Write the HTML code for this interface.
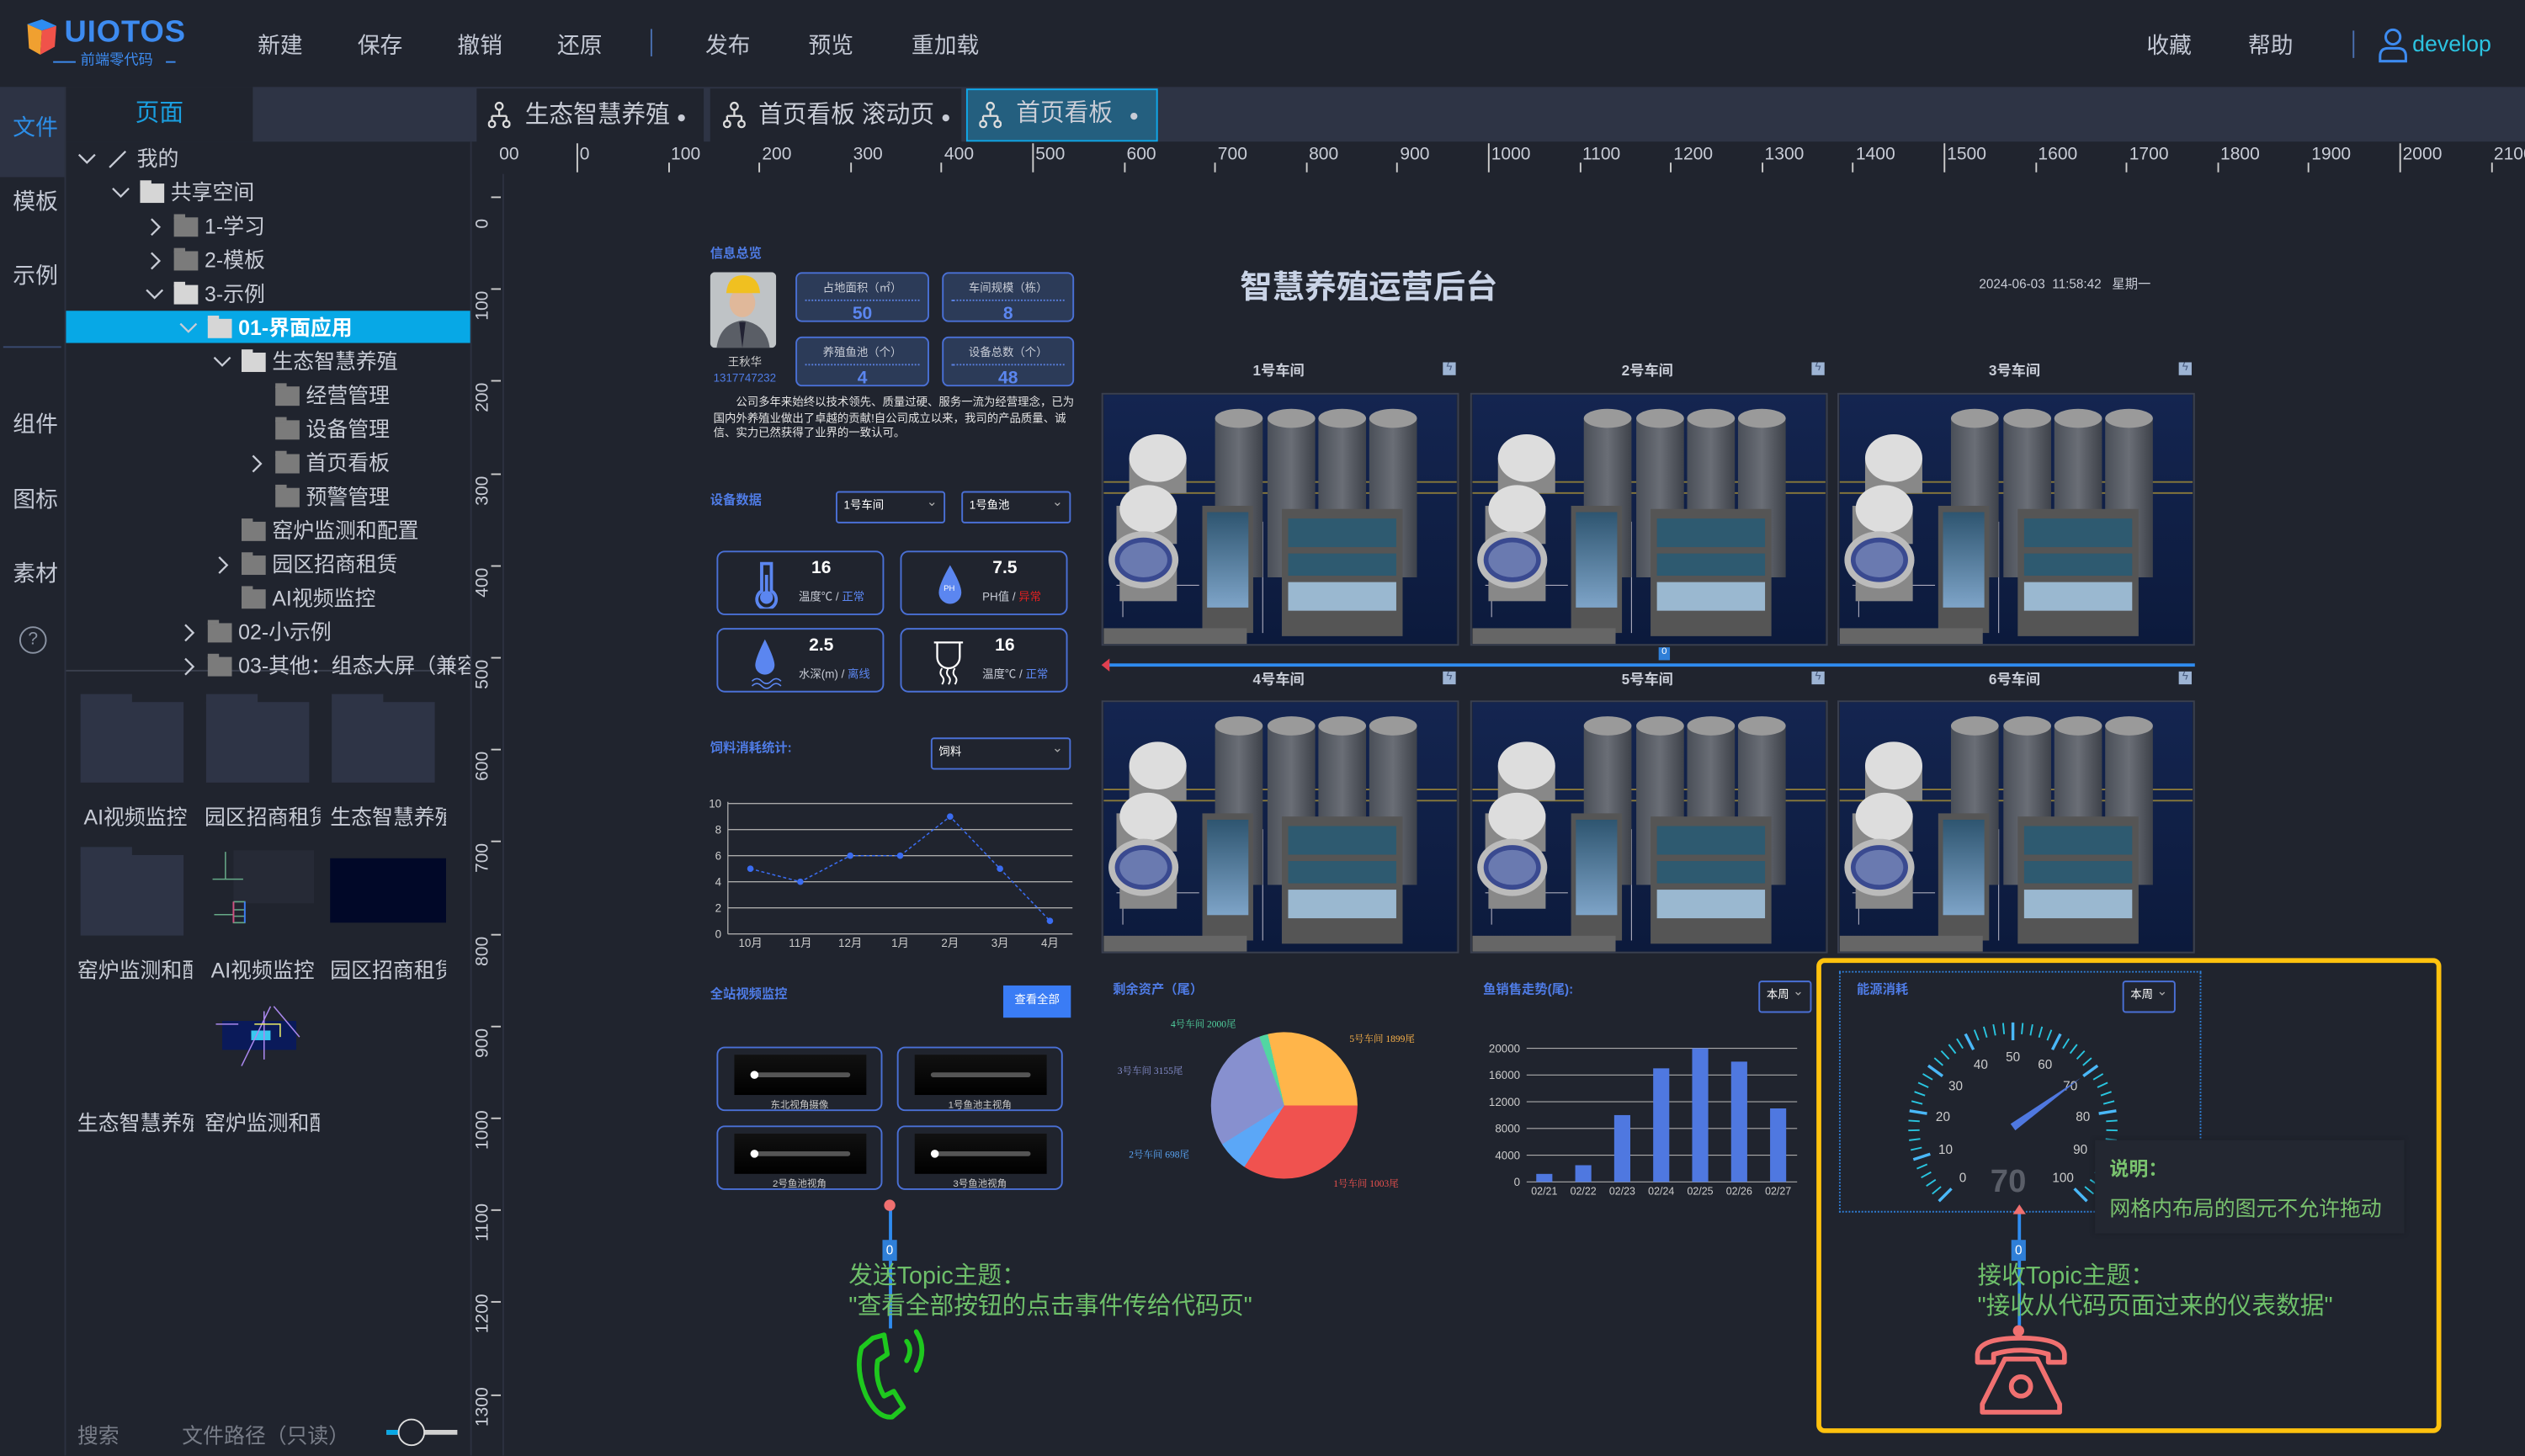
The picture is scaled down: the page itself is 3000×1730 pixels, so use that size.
<!DOCTYPE html>
<html><head><meta charset="utf-8">
<style>
*{margin:0;padding:0;box-sizing:border-box}
html,body{width:3000px;height:1730px;overflow:hidden;background:#20242e}
body{font-family:"Liberation Sans","Noto Sans CJK SC",sans-serif;color:#c8ccd6}
#s{position:absolute;left:0;top:0;width:1568px;height:904px;transform:scale(1.91327);transform-origin:0 0;background:#20242e;overflow:hidden}
.a{position:absolute;white-space:nowrap}
.m{font-size:14px;color:#c3c8d4;top:18px}
.tr{font-size:13px;color:#c8ccd6;line-height:21px;height:21px}
.fo{position:absolute;width:15px;height:12px;background:#7b7b7b;top:5px}
.fo:before{content:"";position:absolute;left:0;top:-2px;width:7px;height:3px;background:inherit}
.fo.o{background:#d6d6d6}
.chev{position:absolute;font-size:11px;color:#c8ccd6}
.lc{font-size:14px;color:#c3c8d4;left:8px}
.tab{position:absolute;top:55px;height:33px;background:#20242e;font-size:15px;color:#c8ccd6;line-height:33px;padding-left:30px}
.bx{position:absolute;background:#2c3b58;border:1px solid #4a70d6;border-radius:4px;text-align:center}
.bx .l{font-size:7px;color:#c8ccd6;margin-top:4px;border-bottom:1px dotted #5a80e0;margin:4px 5px 0;padding-bottom:2px}
.bx .v{font-size:11px;color:#5b86f0;font-weight:bold;margin-top:2px}
.h{font-size:8px;color:#4f7ce6;font-weight:bold}
.sel{position:absolute;border:1px solid #4a70d6;border-radius:2px;font-size:7px;color:#fff;padding-left:4px;line-height:18px;height:20px}
.sel:after{content:"⌄";position:absolute;right:4px;top:-3px;color:#aaa;font-size:8px}
.dc{position:absolute;border:1px solid #4a70d6;border-radius:5px;width:104px;height:40px}
.dc .n{position:absolute;left:64px;top:4px;font-size:11px;color:#fff;font-weight:bold;transform:translateX(-50%)}
.dc .t{position:absolute;left:50px;top:23px;font-size:7px;color:#c8ccd6}
.vc{position:absolute;border:1px solid #4a70d6;border-radius:5px;width:103px;height:40px}
.vc .sc{position:absolute;left:10px;top:4px;width:82px;height:25px;background:linear-gradient(#111,#000)}
.vc .sc i{position:absolute;left:10px;right:10px;top:11px;height:3px;border-radius:2px;background:#555}
.vc .sc b{position:absolute;left:10px;top:10px;width:5px;height:5px;border-radius:50%;background:#fff}
.vc .t{position:absolute;width:100%;text-align:center;top:30px;font-size:6px;color:#ccc}
.ws{position:absolute;width:222px;height:157px}
.wl{position:absolute;font-size:9px;color:#c8ccd6;font-weight:bold}
.bolt{position:absolute;width:8px;height:8px;background:#9db4d4;font-size:7px;line-height:8px;text-align:center;color:#4a5d80}
.rl{position:absolute;top:90px;font-size:11px;color:#c8ccd6}
.rt{position:absolute;top:101px;width:1px;height:6px;background:#ccc}
.vr{position:absolute;left:294px;font-size:11px;color:#c8ccd6;transform:rotate(-90deg);transform-origin:0 0}
.thl{position:absolute;font-size:13px;color:#c8ccd6;width:72px;overflow:hidden;white-space:nowrap}
.tf{position:absolute;width:64px;height:50px;background:#2e3446}
.tf:before{content:"";position:absolute;left:0;top:-5px;width:32px;height:6px;background:#2e3446}
</style></head><body>
<svg width="0" height="0" style="position:absolute">
<defs>
<linearGradient id="bg" x1="0" y1="0" x2="0" y2="1"><stop offset="0" stop-color="#142550"/><stop offset="1" stop-color="#0c1a3c"/></linearGradient>
<linearGradient id="cy" x1="0" y1="0" x2="1" y2="0"><stop offset="0" stop-color="#4a4f58"/><stop offset=".5" stop-color="#6a6e76"/><stop offset="1" stop-color="#3e424a"/></linearGradient>
<linearGradient id="wt" x1="0" y1="0" x2="0" y2="1"><stop offset="0" stop-color="#2e5570"/><stop offset="1" stop-color="#7ea4c8"/></linearGradient>
<symbol id="w" viewBox="0 0 222 157">
<rect width="222" height="157" fill="url(#bg)"/>
<path d="M0 55H222M0 62H222" stroke="#8a7a3a" stroke-width="1"/>
<path d="M12 70V140M100 80V150M8 120H60" stroke="#aab" stroke-width=".6" fill="none"/>
<g fill="url(#cy)"><rect x="70" y="15" width="30" height="100"/><rect x="103" y="15" width="30" height="100"/><rect x="135" y="15" width="30" height="100"/><rect x="167" y="15" width="30" height="100"/></g>
<g fill="#9a9a9a"><ellipse cx="85" cy="15" rx="15" ry="6"/><ellipse cx="118" cy="15" rx="15" ry="6"/><ellipse cx="150" cy="15" rx="15" ry="6"/><ellipse cx="182" cy="15" rx="15" ry="6"/></g>
<g fill="#888"><rect x="16" y="40" width="36" height="22"/><rect x="10" y="100" width="36" height="30"/><rect x="8" y="70" width="38" height="24"/></g>
<g fill="#ddd"><ellipse cx="34" cy="40" rx="18" ry="15"/><ellipse cx="28" cy="72" rx="18" ry="15"/></g>
<ellipse cx="25" cy="104" rx="22" ry="18" fill="#bbb"/><ellipse cx="25" cy="104" rx="18" ry="14" fill="#3a4a90"/><ellipse cx="25" cy="104" rx="15" ry="11" fill="#6a7ab0"/>
<rect x="62" y="70" width="32" height="80" fill="#555"/><rect x="65" y="74" width="26" height="60" fill="url(#wt)"/>
<rect x="112" y="72" width="76" height="80" fill="#555"/><rect x="116" y="78" width="68" height="18" fill="#2e5a70"/><rect x="116" y="100" width="68" height="14" fill="#2e5a70"/><rect x="116" y="118" width="68" height="18" fill="#9ab8d0"/>
<rect x="0" y="147" width="90" height="10" fill="#666"/>
</symbol>
</defs></svg>
<div id="s">
<!-- top bar -->
<svg class="a" style="left:14px;top:11px" width="24" height="24" viewBox="0 0 24 24"><path d="M3 4L12 1L21 5L12 8Z" fill="#2e8cf0"/><path d="M3 4L12 8L11 23L4 19Z" fill="#f0a030"/><path d="M12 8L21 5L20 18L11 23Z" fill="#f0524a"/></svg>
<div class="a" style="left:40px;top:10px;font-size:19px;color:#3d8bf0;font-weight:bold;letter-spacing:.5px">UIOTOS</div>
<div class="a" style="left:50px;top:30px;font-size:9px;color:#3d8bf0">前端零代码</div>
<div class="a" style="left:33px;top:38px;width:14px;height:1px;background:#3d8bf0"></div>
<div class="a" style="left:103px;top:38px;width:6px;height:1px;background:#3d8bf0"></div>
<div class="a m" style="left:160px">新建</div><div class="a m" style="left:222px">保存</div><div class="a m" style="left:284px">撤销</div><div class="a m" style="left:346px">还原</div>
<div class="a" style="left:404px;top:18px;width:1px;height:17px;background:#4a6fb0"></div>
<div class="a m" style="left:438px">发布</div><div class="a m" style="left:502px">预览</div><div class="a m" style="left:566px">重加载</div>
<div class="a m" style="left:1333px">收藏</div><div class="a m" style="left:1396px">帮助</div>
<div class="a" style="left:1461px;top:19px;width:1px;height:17px;background:#4a6fb0"></div>
<svg class="a" style="left:1476px;top:17px" width="20" height="22" viewBox="0 0 20 22"><circle cx="10" cy="6" r="4.5" fill="none" stroke="#3d8bf0" stroke-width="1.6"/><path d="M2 21V18Q2 13 7 13H13Q18 13 18 18V21Z" fill="none" stroke="#3d8bf0" stroke-width="1.6"/></svg>
<div class="a" style="left:1498px;top:19px;font-size:14px;color:#2cc3e0">develop</div>
<!-- row2 -->
<div class="a" style="left:0;top:54px;width:1568px;height:34px;background:#2e3445"></div>
<div class="a" style="left:0;top:54px;width:40px;height:850px;background:#20242e"></div>
<div class="a" style="left:0;top:54px;width:40px;height:56px;background:#2d3344"></div>
<div class="a lc" style="top:69px;color:#2c8ee8">文件</div>
<div class="a lc" style="top:115px">模板</div><div class="a lc" style="top:161px">示例</div>
<div class="a" style="left:2px;top:215px;width:36px;height:1px;background:#3a4a70"></div>
<div class="a lc" style="top:253px">组件</div><div class="a lc" style="top:300px">图标</div><div class="a lc" style="top:346px">素材</div>
<div class="a" style="left:12px;top:389px;width:17px;height:17px;border:1px solid #8a93a3;border-radius:50%;font-size:11px;text-align:center;line-height:15px;color:#8a93a3">?</div>
<div class="a" style="left:40px;top:54px;width:1px;height:850px;background:#2c3140"></div>
<div class="a" style="left:41px;top:54px;width:116px;height:34px;background:#20242e;color:#1a9fe0;font-size:15px;text-align:center;line-height:34px">页面</div>
<div class="a" style="left:292px;top:88px;width:1px;height:816px;background:#2c3140"></div>
<!-- tree -->
<div class="a" style="left:41px;top:193px;width:251px;height:20px;background:#07a8e6"></div>
<div id="tree"></div>
<div class="a" style="left:41px;top:416px;width:251px;height:1px;background:#3a3f4d"></div>
<!-- thumbs -->
<div class="tf" style="left:50px;top:436px"></div><div class="tf" style="left:128px;top:436px"></div><div class="tf" style="left:206px;top:436px"></div>
<div class="thl" style="left:52px;top:497px">AI视频监控</div><div class="thl" style="left:127px;top:497px">园区招商租赁</div><div class="thl" style="left:205px;top:497px">生态智慧养殖</div>
<div class="tf" style="left:50px;top:531px"></div>
<svg class="a" style="left:125px;top:528px" width="70" height="50"><rect x="20" y="0" width="50" height="33" fill="#262a36"/><path d="M15 1V18H26M7 18H15M8 40H20M20 32V45H27V32H20M20 37H27M20 41H27" stroke="#6a8" stroke-width=".8" fill="none"/><path d="M20 32V45" stroke="#d05080"/><path d="M27 32V45" stroke="#3a7cf5"/></svg>
<div class="a" style="left:205px;top:533px;width:72px;height:40px;background:#010828"></div>
<div class="thl" style="left:48px;top:592px">窑炉监测和配置</div><div class="thl" style="left:131px;top:592px">AI视频监控</div><div class="thl" style="left:205px;top:592px">园区招商租赁</div>
<svg class="a" style="left:134px;top:624px" width="60" height="42"><rect x="4" y="10" width="46" height="18" fill="#0a1a5a"/><rect x="22" y="16" width="12" height="6" fill="#3ac8f0"/><path d="M34 1L16 38M36 1L52 20M30 4V34M0 12H14" stroke="#a8e" stroke-width=".8"/><path d="M24 12H40V20" stroke="#ee6" stroke-width=".8" fill="none"/></svg>
<div class="thl" style="left:48px;top:687px">生态智慧养殖</div><div class="thl" style="left:127px;top:687px">窑炉监测和配置</div>
<div class="a" style="left:48px;top:881px;font-size:13px;color:#787d88">搜索</div>
<div class="a" style="left:113px;top:881px;font-size:13px;color:#787d88">文件路径（只读）</div>
<div class="a" style="left:240px;top:888px;width:44px;height:3px;background:#d0d0d0"></div>
<div class="a" style="left:240px;top:888px;width:10px;height:3px;background:#07a8e6"></div>
<div class="a" style="left:247px;top:881px;width:17px;height:17px;border-radius:50%;border:1.5px solid #ddd;background:#20242e"></div>
<!-- tabs -->
<div class="tab" style="left:296px;width:141px">生态智慧养殖 <span style="font-size:10px">●</span></div>
<div class="tab" style="left:441px;width:156px">首页看板 滚动页 <span style="font-size:10px">●</span></div>
<div class="tab" style="left:600px;width:119px;background:#245f7f;border:1.5px solid #10a8ea;line-height:30px">首页看板 <span style="font-size:10px;margin-left:6px">●</span></div>
<div id="tabic"></div>
<!-- rulers -->
<div id="rul"></div>
<!-- content -->
<div class="a h" style="left:441px;top:152px">信息总览</div>
<svg class="a" style="left:441px;top:169px" width="41" height="47"><rect width="41" height="47" rx="3" fill="#bfc3c6"/><path d="M4 47Q6 32 20 30Q35 32 37 47Z" fill="#5a5e66"/><path d="M18 31L20 47L22 31Z" fill="#223"/><ellipse cx="20" cy="19" rx="8" ry="9" fill="#e0b89a"/><path d="M10 13Q11 2 20 2Q30 2 31 13Z" fill="#f0c020"/></svg>
<div class="a" style="left:452px;top:220px;font-size:7px;color:#ccc">王秋华</div>
<div class="a" style="left:443px;top:232px;font-size:7px;color:#4f7ce6">1317747232</div>
<div class="bx" style="left:494px;top:169px;width:83px;height:31px"><div class="l">占地面积（㎡）</div><div class="v">50</div></div>
<div class="bx" style="left:585px;top:169px;width:82px;height:31px"><div class="l">车间规模（栋）</div><div class="v">8</div></div>
<div class="bx" style="left:494px;top:209px;width:83px;height:31px"><div class="l">养殖鱼池（个）</div><div class="v">4</div></div>
<div class="bx" style="left:585px;top:209px;width:82px;height:31px"><div class="l">设备总数（个）</div><div class="v">48</div></div>
<div class="a" style="left:443px;top:246px;width:224px;white-space:normal;font-size:7px;line-height:9.5px;color:#e4e4e4;text-indent:14px">公司多年来始终以技术领先、质量过硬、服务一流为经营理念，已为国内外养殖业做出了卓越的贡献!自公司成立以来，我司的产品质量、诚信、实力已然获得了业界的一致认可。</div>
<div class="a h" style="left:441px;top:305px">设备数据</div>
<div class="sel" style="left:519px;top:305px;width:68px">1号车间</div>
<div class="sel" style="left:597px;top:305px;width:68px">1号鱼池</div>
<div class="dc" style="left:445px;top:342px"><svg class="a" style="left:20px;top:5px" width="20" height="30"><path d="M7 2H13V19A6 6 0 1 1 7 19Z" fill="none" stroke="#5b86f0" stroke-width="2"/><circle cx="10" cy="23" r="4" fill="#5b86f0"/><rect x="9" y="9" width="2" height="12" fill="#5b86f0"/></svg><div class="n">16</div><div class="t">温度℃ / <span style="color:#5b86f0">正常</span></div></div>
<div class="dc" style="left:559px;top:342px"><svg class="a" style="left:22px;top:7px" width="16" height="26"><path d="M8 1Q15 13 15 18A7 7 0 0 1 1 18Q1 13 8 1Z" fill="#5b86f0"/><text x="4" y="17" font-size="5" fill="#fff">PH</text></svg><div class="n">7.5</div><div class="t">PH值 / <span style="color:#e02020">异常</span></div></div>
<div class="dc" style="left:445px;top:390px"><svg class="a" style="left:20px;top:5px" width="20" height="32"><path d="M9 1Q15 13 15 17A6 6 0 0 1 3 17Q3 13 9 1Z" fill="#5b86f0"/><path d="M1 27Q4 24 7 27T13 27T19 27M1 30Q4 27 7 30T13 30T19 30" stroke="#5b86f0" fill="none" stroke-width=".8"/></svg><div class="n">2.5</div><div class="t">水深(m) / <span style="color:#5b86f0">离线</span></div></div>
<div class="dc" style="left:559px;top:390px"><svg class="a" style="left:18px;top:5px" width="22" height="30"><path d="M2 3H20M4 3V12A7 7 0 0 0 18 12V3" fill="none" stroke="#fff" stroke-width="1.2"/><path d="M7 19Q5 22 7 24T7 29M11 19Q9 22 11 24T11 29M15 19Q13 22 15 24T15 29" stroke="#fff" fill="none" stroke-width="1"/></svg><div class="n">16</div><div class="t">温度℃ / <span style="color:#5b86f0">正常</span></div></div>
<div class="a h" style="left:441px;top:459px">饲料消耗统计:</div>
<div class="sel" style="left:578px;top:458px;width:87px">饲料</div>
<svg class="a" style="left:438px;top:494px" width="232" height="100" id="lc"></svg>
<div class="a h" style="left:441px;top:612px">全站视频监控</div>
<div class="a" style="left:623px;top:612px;width:42px;height:20px;background:#3a7cf5;font-size:7px;color:#fff;text-align:center;line-height:20px">查看全部</div>
<div class="vc" style="left:445px;top:650px"><div class="sc"><i></i><b></b></div><div class="t">东北视角摄像</div></div>
<div class="vc" style="left:557px;top:650px"><div class="sc"><i></i></div><div class="t">1号鱼池主视角</div></div>
<div class="vc" style="left:445px;top:699px"><div class="sc"><i></i><b></b></div><div class="t">2号鱼池视角</div></div>
<div class="vc" style="left:557px;top:699px"><div class="sc"><i></i><b></b></div><div class="t">3号鱼池视角</div></div>
<div class="a" style="left:770px;top:162px;font-size:20px;font-weight:bold;color:#c9d3e6">智慧养殖运营后台</div>
<div class="a" style="left:1229px;top:171px;font-size:8px;color:#c8ccd6">2024-06-03 &nbsp;11:58:42 &nbsp;&nbsp;星期一</div>
<div id="ws"></div>
<div class="a" style="left:688px;top:412px;width:675px;height:2px;background:#2f8cf0"></div>
<div class="a" style="left:684px;top:409px;width:0;height:0;border:4px solid transparent;border-right:5px solid #e04050;border-left:0"></div>
<div class="a" style="left:1030px;top:402px;width:7px;height:8px;background:#2f7fd8;font-size:6px;color:#fff;text-align:center">0</div>
<div class="a h" style="left:691px;top:609px">剩余资产（尾）</div>
<div class="a" style="left:752px;top:641px;width:91px;height:91px;border-radius:50%;background:conic-gradient(#ffb54a 0 90deg,#f0524f 90deg 213deg,#5ba7f7 213deg 238deg,#8790cf 238deg 340deg,#52d6a2 340deg 347deg,#ffb54a 347deg)"></div>
<div class="a" style="left:727px;top:631px;font-size:6px;color:#52d6a2;font-family:'Liberation Serif','Noto Serif CJK SC',serif">4号车间 2000尾</div>
<div class="a" style="left:838px;top:640px;font-size:6px;color:#ffb54a;font-family:'Liberation Serif','Noto Serif CJK SC',serif">5号车间 1899尾</div>
<div class="a" style="left:694px;top:660px;font-size:6px;color:#8790cf;font-family:'Liberation Serif','Noto Serif CJK SC',serif">3号车间 3155尾</div>
<div class="a" style="left:701px;top:712px;font-size:6px;color:#5ba7f7;font-family:'Liberation Serif','Noto Serif CJK SC',serif">2号车间 698尾</div>
<div class="a" style="left:828px;top:730px;font-size:6px;color:#f0524f;font-family:'Liberation Serif','Noto Serif CJK SC',serif">1号车间 1003尾</div>
<div class="a h" style="left:921px;top:609px">鱼销售走势(尾):</div>
<div class="sel" style="left:1092px;top:609px;width:33px">本周</div>
<svg class="a" style="left:920px;top:640px" width="200" height="110" id="bc"></svg>
<!-- yellow box -->
<div class="a" style="left:1128px;top:595px;width:388px;height:295px;border:3px solid #ffc20e;border-radius:5px"></div>
<div class="a" style="left:1142px;top:603px;width:225px;height:150px;border:1.5px dotted #2f7fd8"></div>
<div class="a h" style="left:1153px;top:609px">能源消耗</div>
<div class="sel" style="left:1318px;top:609px;width:33px">本周</div>
<svg class="a" style="left:1170px;top:620px" width="160" height="130" id="gg"></svg>
<div class="a" style="left:1236px;top:723px;font-size:20px;font-weight:bold;color:#5a5e68">70</div>
<div class="a" style="left:1301px;top:708px;width:192px;height:58px;background:#232731;box-shadow:0 0 3px #1a1d25"></div>
<div class="a" style="left:1310px;top:717px;font-size:12px;font-weight:bold;color:#79c26e">说明：</div>
<div class="a" style="left:1310px;top:740px;font-size:13px;color:#79c26e">网格内布局的图元不允许拖动</div>
<!-- connectors -->
<div class="a" style="left:552px;top:750px;width:2px;height:75px;background:#2f8cf0"></div>
<div class="a" style="left:549px;top:745px;width:7px;height:7px;border-radius:50%;background:#f07070"></div>
<div class="a" style="left:548px;top:770px;width:9px;height:13px;background:#2f7fd8;font-size:8px;color:#fff;text-align:center;line-height:13px">0</div>
<div class="a" style="left:527px;top:783px;font-size:15px;color:#6ebf6a;line-height:19px">发送Topic主题：<br>"查看全部按钮的点击事件传给代码页"</div>
<svg class="a" style="left:527px;top:823px" width="52" height="60"><path d="M15 8L22 6L24 18L18 22Q16 34 22 44L28 41L34 51L27 57Q18 58 11 44Q4 28 8 14Z" fill="none" stroke="#1ec81e" stroke-width="3" stroke-linejoin="round"/><path d="M36 10Q40 15 36 22M42 4Q49 15 42 28" fill="none" stroke="#1ec81e" stroke-width="3" stroke-linecap="round"/></svg>
<div class="a" style="left:1253px;top:752px;width:2px;height:74px;background:#2f8cf0"></div>
<div class="a" style="left:1250px;top:748px;width:0;height:0;border-left:4px solid transparent;border-right:4px solid transparent;border-bottom:6px solid #f07070"></div>
<div class="a" style="left:1249px;top:770px;width:9px;height:13px;background:#2f7fd8;font-size:8px;color:#fff;text-align:center;line-height:13px">0</div>
<div class="a" style="left:1250px;top:823px;width:7px;height:7px;border-radius:50%;background:#f07070"></div>
<div class="a" style="left:1228px;top:783px;font-size:15px;color:#6ebf6a;line-height:19px">接收Topic主题：<br>"接收从代码页面过来的仪表数据"</div>
<svg class="a" style="left:1225px;top:828px" width="60" height="52"><path d="M3 18V13Q4 3 30 3Q56 3 57 13V18H47V13Q30 8 13 13V18Z" fill="none" stroke="#f07070" stroke-width="3" stroke-linejoin="round"/><path d="M20 16L6 44V49H54V44L40 16Z" fill="none" stroke="#f07070" stroke-width="3" stroke-linejoin="round"/><circle cx="30" cy="33" r="6" fill="none" stroke="#f07070" stroke-width="3"/></svg>
</div>
<script>
function el(h){var d=document.createElement('div');d.innerHTML=h;while(d.firstChild)document.getElementById('s').appendChild(d.firstChild);}
// tree
var T=[[0,'v','/', '我的'],[1,'v','o','共享空间'],[2,'>','c','1-学习'],[2,'>','c','2-模板'],[2,'v','o','3-示例'],[3,'v','o','01-界面应用'],[4,'v','o','生态智慧养殖'],[5,'','c','经营管理'],[5,'','c','设备管理'],[5,'>','c','首页看板'],[5,'','c','预警管理'],[4,'','c','窑炉监测和配置'],[4,'>','c','园区招商租赁'],[4,'','c','AI视频监控'],[3,'>','c','02-小示例'],[3,'>','c','03-其他：组态大屏（兼容']];
var h='';T.forEach(function(r,i){var y=88+i*21,x=52+r[0]*21;var hi=i==5;
if(r[1]=='v')h+='<svg class="a" style="left:'+(x-4)+'px;top:'+(y+7)+'px" width="12" height="8"><path d="M1 1L6 6L11 1" stroke="#c8ccd6" fill="none" stroke-width="1.2"/></svg>';
if(r[1]=='>')h+='<svg class="a" style="left:'+(x-1)+'px;top:'+(y+5)+'px" width="8" height="12"><path d="M1 1L6 6L1 11" stroke="#c8ccd6" fill="none" stroke-width="1.2"/></svg>';
if(r[2]=='/')h+='<svg class="a" style="left:'+(x+15)+'px;top:'+(y+5)+'px" width="12" height="12"><path d="M1 11L11 1" stroke="#c8ccd6" stroke-width="1.2"/></svg>';
else h+='<div class="fo '+(r[2]=='o'?'o':'')+'" style="left:'+(x+14)+'px;top:'+(y+5)+'px"></div>';
h+='<div class="a tr" style="left:'+(x+33)+'px;top:'+y+'px;'+(hi?'color:#fff;font-weight:bold;':'')+'max-width:'+(292-x-33)+'px;overflow:hidden">'+r[3]+'</div>';});
el(h);
// tab icons
h='';[303,449,608].forEach(function(x){h+='<svg class="a" style="left:'+x+'px;top:63px" width="14" height="17"><circle cx="7" cy="3" r="2.2" fill="none" stroke="#ddd" stroke-width="1.2"/><path d="M7 5V9M2.5 9H11.5M2.5 9V12M11.5 9V12" stroke="#ddd" stroke-width="1.2" fill="none"/><circle cx="2.5" cy="14" r="2" fill="none" stroke="#ddd" stroke-width="1.2"/><circle cx="11.5" cy="14" r="2" fill="none" stroke="#ddd" stroke-width="1.2"/></svg>';});el(h);
// rulers
h='<div class="a" style="left:293px;top:88px;width:1275px;height:20px;background:#20242e"></div><div class="rl" style="left:310px">00</div>';
for(var k=0;k<=21;k++){var x=358+k*56.6;h+='<div class="rl" style="left:'+(x+2)+'px">'+(k*100)+'</div><div class="rt" style="left:'+x+'px;'+(k%5==0?'top:89px;height:18px':'')+'"></div>';}
for(var k=0;k<=13;k++){var y=122+k*57.2;h+='<div class="vr" style="top:'+(y+20)+'px">'+(k*100)+'</div><div class="a" style="left:305px;top:'+y+'px;width:6px;height:1px;background:#ccc"></div>';}
h+='<div class="a" style="left:312px;top:108px;width:1px;height:796px;background:#2c3140"></div>';
el(h);
// workshops
h='';var xs=[684,913,1141],ys=[[228,244],[420,435]];
ys.forEach(function(yy,r){xs.forEach(function(x,c){var n=r*3+c+1;h+='<div class="wl" style="left:'+(x+94)+'px;top:'+(yy[0]-5)+'px">'+n+'号车间</div><div class="bolt" style="left:'+(x+212)+'px;top:'+(yy[0]-3)+'px">ϟ</div><svg class="ws" style="left:'+x+'px;top:'+yy[1]+'px;border:1px solid #3a4050"><use href="#w"/></svg>';});});
el(h);
// line chart
var s='',lc=document.getElementById('lc');var ox=14,y0=86;
for(var v=0;v<=10;v+=2){var y=y0-v*8.1;s+='<line x1="'+ox+'" x2="228" y1="'+y+'" y2="'+y+'" stroke="#aaa" stroke-width=".7"/><text x="'+(ox-4)+'" y="'+(y+2.5)+'" font-size="7" fill="#ccc" text-anchor="end">'+v+'</text>';}
s+='<line x1="'+ox+'" x2="'+ox+'" y1="4" y2="'+y0+'" stroke="#aaa" stroke-width=".7"/>';
var ms=['10月','11月','12月','1月','2月','3月','4月'],vs=[5,4,6,6,9,5,1],pts=[];
ms.forEach(function(m,i){var x=28+i*31,y=y0-vs[i]*8.1;pts.push(x+','+y);s+='<circle cx="'+x+'" cy="'+y+'" r="2" fill="#3a6cf0"/><text x="'+x+'" y="'+(y0+8)+'" font-size="7" fill="#ccc" text-anchor="middle">'+m+'</text>';});
s+='<polyline points="'+pts.join(' ')+'" fill="none" stroke="#3a6cf0" stroke-width=".8" stroke-dasharray="2 1.5"/>';lc.innerHTML=s;
// bar chart
s='';var b0=94;for(var v=0;v<=20000;v+=4000){var y=b0-v/20000*83;s+='<line x1="28" x2="196" y1="'+y+'" y2="'+y+'" stroke="#aaa" stroke-width=".6"/><text x="24" y="'+(y+2.5)+'" font-size="7" fill="#ccc" text-anchor="end">'+v+'</text>';}
[1200,2500,10000,17000,20000,18000,11000].forEach(function(v,i){var x=39+i*24.2,hh=v/20000*83;s+='<rect x="'+(x-5)+'" y="'+(b0-hh)+'" width="10" height="'+hh+'" fill="#4f78e0"/><text x="'+x+'" y="'+(b0+8)+'" font-size="6.5" fill="#ccc" text-anchor="middle">02/'+(21+i)+'</text>';});
document.getElementById('bc').innerHTML=s;
// gauge
s='<defs><filter id="gl"><feGaussianBlur stdDeviation="1"/></filter></defs>';var cx=80,cy=80;
for(var v=0;v<=100;v+=2){var a=(225-v*2.7)*Math.PI/180,big=v%10==0,r1=big?54:58,r2=65;
s+='<line x1="'+(cx+r1*Math.cos(a))+'" y1="'+(cy-r1*Math.sin(a))+'" x2="'+(cx+r2*Math.cos(a))+'" y2="'+(cy-r2*Math.sin(a))+'" stroke="'+(big?'#4ab8f8':'#29c5e0')+'" stroke-width="'+(big?1.8:1)+'"/>';
if(big){var rl=44;s+='<text x="'+(cx+rl*Math.cos(a))+'" y="'+(cy-rl*Math.sin(a)+3)+'" font-size="8" fill="#ccc" text-anchor="middle">'+v+'</text>';}}
var a=(225-70*2.7)*Math.PI/180,px=Math.cos(a+Math.PI/2)*2.5,py=-Math.sin(a+Math.PI/2)*2.5;
s+='<polygon points="'+(cx+px)+','+(cy+py)+' '+(cx+52*Math.cos(a))+','+(cy-52*Math.sin(a))+' '+(cx-px)+','+(cy-py)+'" fill="#4f78e0"/>';
document.getElementById('gg').innerHTML=s;
</script>
</body></html>
